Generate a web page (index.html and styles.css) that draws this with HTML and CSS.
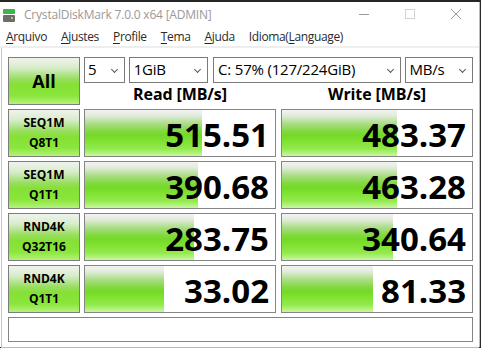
FILE: index.html
```html
<!DOCTYPE html>
<html lang="pt">
<head>
    <meta charset="UTF-8">
    <meta name="viewport" content="width=device-width, initial-scale=1.0">
    <title>CrystalDiskMark 7.0.0 x64 [ADMIN]</title>
    <link rel="stylesheet" href="styles.css">
</head>
<body>
    <div class="desktop"></div>
    <div class="window">
        <div class="titlebar">
            <svg class="app-icon" width="12" height="13" viewBox="0 0 12 13">
                <rect x="0" y="0" width="12" height="5" rx="1" fill="#3fb44a"/>
                <rect x="0" y="6" width="12" height="7" rx="1" fill="#6d6d6d"/>
                <rect x="8" y="8" width="2" height="2" fill="#8ee04e"/>
            </svg>
            <span class="title">CrystalDiskMark 7.0.0 x64 [ADMIN]</span>
            <div class="controls">
                <svg width="46" height="24" viewBox="0 0 46 24"><line x1="18" y1="12.5" x2="28" y2="12.5" stroke="#9a9a9a"/></svg>
                <svg width="46" height="24" viewBox="0 0 46 24"><rect x="18.5" y="7.5" width="9" height="9" fill="none" stroke="#d2d2d2"/></svg>
                <svg width="46" height="24" viewBox="0 0 46 24"><path d="M18 7 L28 17 M28 7 L18 17" stroke="#9a9a9a"/></svg>
            </div>
        </div>

        <div class="menubar">
            <span><u>A</u>rquivo</span>
            <span><u>A</u>justes</span>
            <span><u>P</u>rofile</span>
            <span><u>T</u>ema</span>
            <span><u>A</u>juda</span>
            <span>Idioma(<u>L</u>anguage)</span>
        </div>

        <div class="main">
            <div class="row">
                <div class="btn btn-all">All</div>
                <div class="top-right">
                    <div class="combos">
                        <div class="combo c-count">5</div>
                        <div class="combo c-size">1GiB</div>
                        <div class="combo c-drive">C: 57% (127/224GiB)</div>
                        <div class="combo c-unit">MB/s</div>
                    </div>
                    <div class="headers">
                        <div class="head">Read [MB/s]</div>
                        <div class="head">Write [MB/s]</div>
                    </div>
                </div>
            </div>

            <div class="row">
                <div class="btn">SEQ1M<br>Q8T1</div>
                <div class="value" style="--w:117px">515.51</div>
                <div class="value" style="--w:115px">483.37</div>
            </div>
            <div class="row">
                <div class="btn">SEQ1M<br>Q1T1</div>
                <div class="value" style="--w:113px">390.68</div>
                <div class="value" style="--w:115px">463.28</div>
            </div>
            <div class="row">
                <div class="btn">RND4K<br>Q32T16</div>
                <div class="value" style="--w:109px">283.75</div>
                <div class="value" style="--w:111px">340.64</div>
            </div>
            <div class="row">
                <div class="btn">RND4K<br>Q1T1</div>
                <div class="value" style="--w:79px">33.02</div>
                <div class="value" style="--w:91px">81.33</div>
            </div>

            <div class="status"></div>
        </div>
    </div>
</body>
</html>
```

FILE: styles.css
```css
* {
    box-sizing: border-box;
}
body {
    margin: 0;
    width: 481px;
    height: 348px;
    overflow: hidden;
    background: #2a2a2a;
    font-family: "Open Sans", "Noto Sans", sans-serif;
    color: #000;
}
.desktop {
    height: 2px;
    background: #262626;
}
.window {
    width: 480px;
    height: 345px;
    background: white;
    border-right: 1px solid #bcbcbc;
}
.titlebar {
    display: flex;
    align-items: center;
    height: 24px;
    padding-left: 3px;
}
.app-icon {
    margin-top: 3px;
}
.title {
    margin-left: 9px;
    font-size: 12px;
    color: #999;
    letter-spacing: -0.2px;
}
.controls {
    margin-left: auto;
    display: flex;
}
.menubar {
    display: flex;
    gap: 14px;
    height: 18px;
    padding: 2px 0 0 6px;
    font-size: 12px;
    color: #2a2a2a;
    letter-spacing: -0.35px;
    border-bottom: 2px solid #eeeeee;
    box-sizing: content-box;
}
.menubar u {
    text-decoration-thickness: 1px;
    text-underline-offset: 2px;
}
.main {
    margin-left: 1px;
    height: 300px;
    padding: 9px 0 0 6px;
    border-left: 1px solid #c4c4c4;
    border-bottom: 1px solid #b8b8b8;
    display: flex;
    flex-direction: column;
    gap: 4px;
}
.row {
    display: flex;
    height: 48px;
}
.btn {
    width: 72px;
    margin-right: 4px;
    border: 1px solid #7d7d7d;
    background: linear-gradient(#f0f3ee 0%, #d6ecc8 22%, #9ade62 45%, #86e036 58%, #8ae63b 82%, #b4f27c 100%);
    display: flex;
    align-items: center;
    justify-content: center;
    text-align: center;
    font-weight: 700;
    font-size: 12px;
    line-height: 20px;
}
.btn-all {
    font-size: 18px;
}
.top-right {
    width: 389px;
    display: flex;
    flex-direction: column;
}
.combos {
    display: flex;
    height: 26px;
}
.combo {
    position: relative;
    height: 26px;
    border: 1px solid #7a7a7a;
    background: white;
    font-size: 15px;
    line-height: 23px;
    padding-left: 4px;
    margin-right: 4px;
    letter-spacing: -0.2px;
}
.combo::after {
    content: "";
    position: absolute;
    right: 7px;
    top: 9px;
    width: 4px;
    height: 4px;
    border-right: 1px solid #555;
    border-bottom: 1px solid #555;
    transform: rotate(45deg);
}
.c-count {
    width: 41px;
    padding-left: 3px;
}
.c-size {
    width: 80px;
    margin-right: 5px;
}
.c-drive {
    width: 189px;
}
.c-unit {
    width: 69px;
    margin-right: 0;
}
.headers {
    display: flex;
    gap: 5px;
    height: 22px;
    padding-top: 1px;
}
.head {
    width: 192px;
    text-align: center;
    font-weight: 700;
    font-size: 16px;
    line-height: 20px;
    letter-spacing: -0.1px;
}
.value {
    width: 192px;
    margin-right: 5px;
    border: 1px solid #858585;
    background-color: white;
    background-image: linear-gradient(#f2f2f2 0%, #e2ecdc 12%, #a9dd84 30%, #84d944 45%, #74d926 55%, #80e232 68%, #94ea4e 85%, #c9f6a4 100%);
    background-size: var(--w) 100%;
    background-repeat: no-repeat;
    display: flex;
    align-items: center;
    justify-content: flex-end;
    padding: 2px 6px 0 0;
    font-weight: 700;
    font-size: 33px;
}
.value:last-child {
    margin-right: 0;
}
.status {
    width: 465px;
    height: 25px;
    border: 1px solid #858585;
    background: white;
}
```
